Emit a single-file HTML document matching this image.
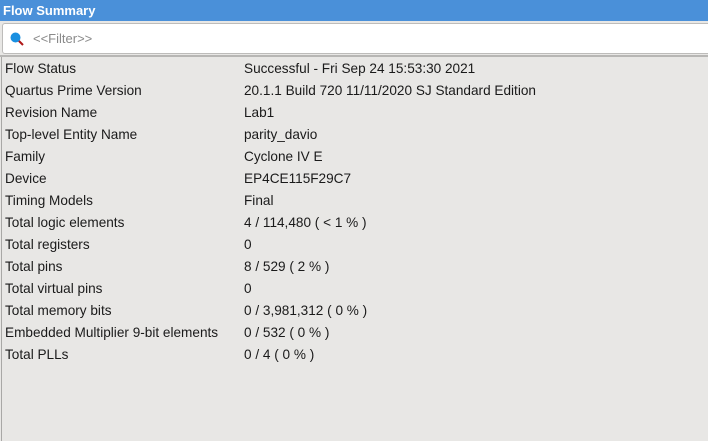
<!DOCTYPE html>
<html><head><meta charset="utf-8"><style>
*{margin:0;padding:0;box-sizing:border-box}
body{width:708px;height:441px;background:#e8e7e5;font-family:"Liberation Sans",sans-serif;font-size:13.6px;color:#1a1a1a;position:relative;overflow:hidden}
.hd{position:absolute;left:0;top:0;width:708px;height:21px;background:#4a90d9;color:#fff;font-weight:bold;font-size:13px;line-height:21px;padding-left:3px}
.gap{position:absolute;left:0;top:21px;width:708px;height:2px;background:#e8e7e5}
.fl{position:absolute;left:2px;top:23px;width:720px;height:31px;background:#fff;border:1px solid #bdbcba;border-radius:3px}
.fl span{position:absolute;left:30px;top:7px;color:#8a8a8a;font-size:13px}
.ic{position:absolute;left:7px;top:8px}
.ln{position:absolute;left:0;top:55px;width:708px;height:2px;background:#b7b6b4}
.vl{position:absolute;left:1px;top:57px;width:1px;height:384px;background:#a9a8a6}
.rows{position:absolute;left:0;top:58px}
.r{height:22px;line-height:22px;position:relative;width:708px}
.a{position:absolute;left:5px}
.b{position:absolute;left:244px}
</style></head><body>
<div class="hd">Flow Summary</div>
<div class="gap"></div>
<div class="fl"><svg class="ic" width="16" height="16" viewBox="0 0 16 16"><line x1="8" y1="8" x2="13" y2="13" stroke="#b01818" stroke-width="2"/><circle cx="5.5" cy="5.5" r="5" fill="#1a8fe0"/></svg><span>&lt;&lt;Filter&gt;&gt;</span></div>
<div class="ln"></div>
<div class="vl"></div>
<div class="rows">
<div class="r"><span class="a">Flow Status</span><span class="b">Successful - Fri Sep 24 15:53:30 2021</span></div>
<div class="r"><span class="a">Quartus Prime Version</span><span class="b">20.1.1 Build 720 11/11/2020 SJ Standard Edition</span></div>
<div class="r"><span class="a">Revision Name</span><span class="b">Lab1</span></div>
<div class="r"><span class="a">Top-level Entity Name</span><span class="b">parity_davio</span></div>
<div class="r"><span class="a">Family</span><span class="b">Cyclone IV E</span></div>
<div class="r"><span class="a">Device</span><span class="b">EP4CE115F29C7</span></div>
<div class="r"><span class="a">Timing Models</span><span class="b">Final</span></div>
<div class="r"><span class="a">Total logic elements</span><span class="b">4 / 114,480 ( &lt; 1 % )</span></div>
<div class="r"><span class="a">Total registers</span><span class="b">0</span></div>
<div class="r"><span class="a">Total pins</span><span class="b">8 / 529 ( 2 % )</span></div>
<div class="r"><span class="a">Total virtual pins</span><span class="b">0</span></div>
<div class="r"><span class="a">Total memory bits</span><span class="b">0 / 3,981,312 ( 0 % )</span></div>
<div class="r"><span class="a">Embedded Multiplier 9-bit elements</span><span class="b">0 / 532 ( 0 % )</span></div>
<div class="r"><span class="a">Total PLLs</span><span class="b">0 / 4 ( 0 % )</span></div>
</div>
</body></html>
